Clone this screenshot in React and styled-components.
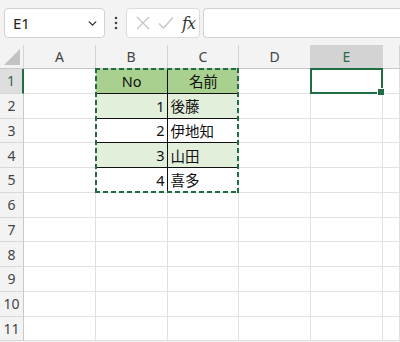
import React from 'react'
import styled, { createGlobalStyle } from 'styled-components'
import { ChevronDown } from 'lucide-react'

const GlobalStyle = createGlobalStyle`
  html, body {
    margin: 0;
    padding: 0;
    background: #f3f3f3;
    overflow: hidden;
  }
  * { box-sizing: border-box; }
`

const COL_W = 71.75
const ROW_H = 24.75
const GREEN = '#1f6e43'

const Page = styled.div`
  width: 400px;
  height: 342px;
  overflow: hidden;
  background: #f3f3f3;
  font-family: "Noto Sans", "Noto Sans CJK JP", sans-serif;
`

const FormulaBar = styled.div`
  height: 45px;
  display: flex;
  align-items: flex-start;
  padding: 8px 0 0 4px;
`

const NameBox = styled.div`
  width: 101px;
  height: 30px;
  background: #fff;
  border: 1px solid #d2d2d2;
  border-radius: 4px;
  display: flex;
  align-items: center;
  justify-content: space-between;
  padding: 0 5px 0 8px;
  font-size: 15px;
  color: #222;
`

const Grip = styled.div`
  width: 21px;
  height: 30px;
  display: flex;
  align-items: center;
  justify-content: center;
`

const ActionBox = styled.div`
  width: 74px;
  height: 30px;
  background: #fff;
  border: 1px solid #dcdcdc;
  border-radius: 4px;
  display: flex;
  align-items: center;
  justify-content: space-between;
  padding: 0 4px 0 9px;
`

const Fx = styled.span`
  font-family: "DejaVu Serif", "Liberation Serif", serif;
  font-style: italic;
  font-size: 16px;
  color: #333;
  letter-spacing: -1px;
`

const FormulaInput = styled.div`
  flex: 1;
  height: 30px;
  margin-left: 3px;
  background: #fff;
  border: 1px solid #d2d2d2;
  border-right: none;
  border-radius: 4px 0 0 4px;
`

const Sheet = styled.div`
  display: grid;
  grid-template-columns: 24px repeat(5, ${COL_W}px) 1fr;
  grid-template-rows: 24px;
  grid-auto-rows: ${ROW_H}px;
  background: #fff;
`

const Corner = styled.div`
  background: #f3f3f3;
  border-right: 1px solid #d4d4d4;
  border-bottom: 1px solid #c8c8c8;
  position: relative;
  &::after {
    content: "";
    position: absolute;
    right: 3px;
    bottom: 3px;
    width: 0;
    height: 0;
    border-left: 16px solid transparent;
    border-bottom: 16px solid #c3c3c3;
  }
`

const ColHead = styled.div`
  background: ${p => (p.$active ? '#d3d3d3' : '#f3f3f3')};
  color: ${p => (p.$active ? '#2f6b4a' : '#444')};
  border-right: 1px solid #d4d4d4;
  border-bottom: 1px solid ${p => (p.$active ? '#b0b0b0' : '#c8c8c8')};
  display: flex;
  align-items: center;
  justify-content: center;
  font-size: 14px;
`

const RowHead = styled.div`
  background: ${p => (p.$active ? '#dedede' : '#f3f3f3')};
  color: ${p => (p.$active ? '#2f6b4a' : '#444')};
  border-right: ${p => (p.$active ? `2px solid ${GREEN}` : '1px solid #c8c8c8')};
  border-bottom: 1px solid #d8d8d8;
  display: flex;
  align-items: center;
  justify-content: center;
  font-size: 14px;
`

const fills = { head: '#a9d08e', band: '#e2efda', plain: '#fff' }

const Cell = styled.div`
  grid-column: ${p => p.$col};
  grid-row: ${p => p.$row};
  background: ${p => (p.$fill ? fills[p.$fill] : '#fff')};
  border-right: 1px solid ${p => (p.$lineRight ? '#111' : '#e1e1e1')};
  border-bottom: 1px solid ${p => (p.$lineBottom ? '#111' : '#e1e1e1')};
  display: flex;
  align-items: center;
  justify-content: ${p => p.$align || 'flex-start'};
  padding: 0 2px 0 3px;
  font-family: "Noto Sans", "Noto Sans CJK JP", sans-serif;
  font-size: 14.5px;
  color: #111;
  white-space: nowrap;
`

const dash = (dir) =>
  `repeating-linear-gradient(${dir}, ${GREEN} 0 5px, transparent 5px 8px)`

const CopyMarquee = styled.div`
  grid-column: 3 / 5;
  grid-row: 2 / 7;
  margin: -1px 0 0 -1px;
  pointer-events: none;
  z-index: 2;
  background-image: ${dash('to right')}, ${dash('to right')}, ${dash('to bottom')}, ${dash('to bottom')};
  background-size: 100% 2px, 100% 2px, 2px 100%, 2px 100%;
  background-position: 0 0, 0 100%, 0 0, 100% 0;
  background-repeat: no-repeat;
`

const Selection = styled.div`
  grid-column: 6;
  grid-row: 2;
  margin: -1px 0 0 -1px;
  border: 2px solid ${GREEN};
  z-index: 3;
  position: relative;
  pointer-events: none;
  &::after {
    content: "";
    position: absolute;
    right: -4px;
    bottom: -4px;
    width: 6px;
    height: 6px;
    background: ${GREEN};
    border: 1px solid #fff;
  }
`

const columns = ['A', 'B', 'C', 'D', 'E', '']
const data = [
  ['No', '名前'],
  ['1', '後藤'],
  ['2', '伊地知'],
  ['3', '山田'],
  ['4', '喜多'],
]

const Dots = () => (
  <svg width="4" height="14" viewBox="0 0 4 14">
    <circle cx="2" cy="2" r="1.3" fill="#444" />
    <circle cx="2" cy="7" r="1.3" fill="#444" />
    <circle cx="2" cy="12" r="1.3" fill="#444" />
  </svg>
)

const CrossIcon = () => (
  <svg width="14" height="14" viewBox="0 0 14 14">
    <path d="M1 1 L13 13 M13 1 L1 13" stroke="#c4c4c4" strokeWidth="1.3" fill="none" />
  </svg>
)

const CheckIcon = () => (
  <svg width="16" height="14" viewBox="0 0 16 14">
    <path d="M1 7.5 L5.5 12 L15 1.5" stroke="#c4c4c4" strokeWidth="1.3" fill="none" />
  </svg>
)

const App = () => {
  const rows = Array.from({ length: 11 }, (_, i) => i + 1)

  const cellFor = (r, c) => {
    const col = c + 2
    const gridRow = r + 1
    if ((c === 1 || c === 2) && r <= 5) {
      const value = data[r - 1][c - 1]
      const fill = r === 1 ? 'head' : r % 2 === 0 ? 'band' : 'plain'
      const align = r === 1 ? 'center' : c === 1 ? 'flex-end' : 'flex-start'
      return (
        <Cell
          key={`${r}-${c}`}
          $col={col}
          $row={gridRow}
          $fill={fill}
          $align={align}
          $lineRight={c === 1}
          $lineBottom={r < 5}
        >
          {value}
        </Cell>
      )
    }
    return <Cell key={`${r}-${c}`} $col={col} $row={gridRow} />
  }

  return (
    <Page>
      <GlobalStyle />
      <FormulaBar>
        <NameBox>
          <span>E1</span>
          <ChevronDown size={13} strokeWidth={2.6} color="#333" />
        </NameBox>
        <Grip><Dots /></Grip>
        <ActionBox>
          <CrossIcon />
          <CheckIcon />
          <Fx>fx</Fx>
        </ActionBox>
        <FormulaInput />
      </FormulaBar>
      <Sheet>
        <Corner />
        {columns.map((c, i) => (
          <ColHead key={i} $active={c === 'E'}>{c}</ColHead>
        ))}
        {rows.map(r => (
          <React.Fragment key={r}>
            <RowHead $active={r === 1} style={{ gridRow: r + 1 }}>{r}</RowHead>
            {columns.map((_, c) => cellFor(r, c))}
          </React.Fragment>
        ))}
        <CopyMarquee />
        <Selection />
      </Sheet>
    </Page>
  )
}

export default App
